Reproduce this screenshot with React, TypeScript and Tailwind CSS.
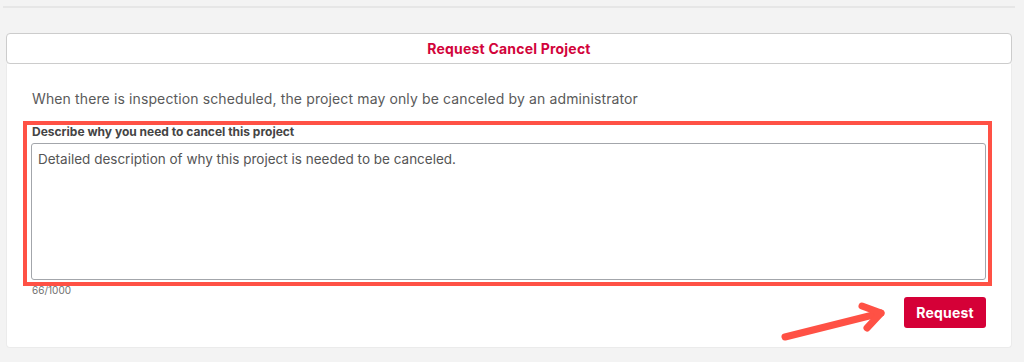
export default function App() {
  return (
    <div className="relative h-[362px] w-full overflow-hidden bg-[#f3f3f3] pt-[6px] font-['Inter',sans-serif]">
      <div className="mx-[3px] mr-[9px] h-[2px] bg-[#e6e6e6]" />

      <div className="ml-[6px] mr-[12px] mt-[25px]">
        <div className="flex h-[31px] items-center justify-center rounded-[4px] border border-[#cccccc] bg-white">
          <span className="text-[14px] font-bold tracking-[0.2px] text-[#d2043b]">Request Cancel Project</span>
        </div>

        <div className="flex h-[284px] flex-col rounded-b-[4px] border-x border-b border-[#ebebeb] bg-white pl-[16px] pr-[19px] pt-[25px]">
          <p className="ml-[9px] text-[14px] leading-[20px] tracking-[0.12px] text-[#5a5a5a]">
            When there is inspection scheduled, the project may only be canceled by an administrator
          </p>

          <div className="mt-[12px] border-[4px] border-[#ff5145] pb-[2px] pl-[4px] pr-[2px] pt-0">
            <label className="block pl-[1px] text-[12px] font-bold leading-[14px] text-[#444444]">
              Describe why you need to cancel this project
            </label>
            <textarea
              className="mt-[4px] block h-[137px] w-full resize-none rounded-[3px] border border-[#a3a6ab] px-[6px] py-[6px] text-[13.5px] leading-[18px] text-[#555555] outline-none"
              defaultValue="Detailed description of why this project is needed to be canceled."
            />
          </div>

          <div className="-mt-[2px] ml-[9px] text-[10px] leading-[12px] text-[#707070]">66/1000</div>

          <button className="ml-auto mr-[6px] mt-[1px] h-[31px] w-[82px] rounded-[3px] bg-[#d50037] text-[14px] font-bold tracking-[0.2px] text-white">
            Request
          </button>
        </div>
      </div>

      <svg className="absolute left-[778px] top-[300px]" width="112" height="44" viewBox="0 0 112 44">
        <g stroke="#ff5145" strokeWidth="7" strokeLinecap="round" strokeLinejoin="round" fill="none">
          <path d="M7 37 L103 13" />
          <path d="M84 6 L103 13 L89 28" />
        </g>
      </svg>
    </div>
  );
}
